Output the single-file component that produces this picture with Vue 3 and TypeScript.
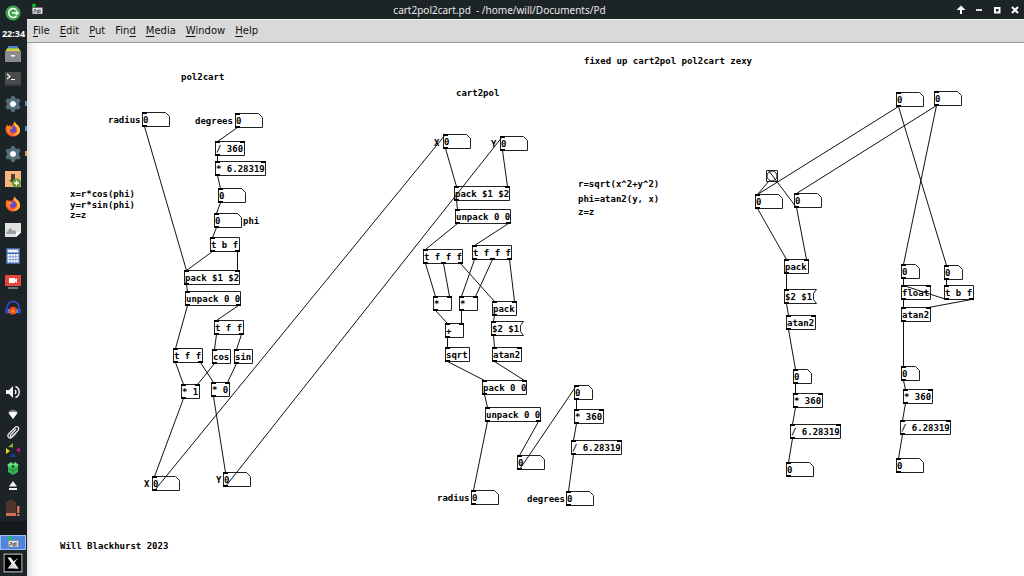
<script setup lang="ts">
import { computed } from 'vue'

type Kind = 'object' | 'number' | 'message' | 'bang'
interface PatchNode { id: string; kind: Kind; x: number; y: number; w: number; text: string; ins: number; outs: number }
interface Shape { d: string; fill?: string; stroke?: string; width?: number }

const BOX_H = 15
const PORT_W = 5

function obj(id: string, x: number, y: number, w: number, text: string, ins = 1, outs = 1): PatchNode {
  return { id, kind: 'object', x, y, w, text, ins, outs }
}
function num(id: string, x: number, y: number, w = 28): PatchNode {
  return { id, kind: 'number', x, y, w, text: '0', ins: 1, outs: 1 }
}
function msg(id: string, x: number, y: number, text: string): PatchNode {
  return { id, kind: 'message', x, y, w: 33, text, ins: 1, outs: 1 }
}

const nodes: PatchNode[] = [
  num('radius', 115, 69),
  num('degrees', 208, 70),
  obj('div360', 188, 98, 30, '/ 360', 2),
  obj('mulTau', 188, 118, 51, '* 6.28319', 2),
  num('rad', 191, 145),
  num('phi', 187, 170),
  obj('tbf', 183, 194, 30, 't b f', 1, 2),
  obj('packA', 157, 227, 56, 'pack $1 $2', 2),
  obj('unpackA', 158, 248, 56, 'unpack 0 0', 1, 2),
  obj('tffB', 187, 277, 30, 't f f', 1, 2),
  obj('tffA', 146, 305, 30, 't f f', 1, 2),
  obj('cos', 185, 306, 19, 'cos'),
  obj('sin', 207, 306, 19, 'sin'),
  obj('mul1', 154, 341, 19, '* 1', 2),
  obj('mul0', 184, 339, 19, '* 0', 2),
  num('outX', 125, 433),
  num('outY', 196, 429),

  num('inX', 416, 91),
  num('inY', 473, 93),
  obj('packB', 427, 143, 56, 'pack $1 $2', 2),
  obj('unpackB', 428, 166, 56, 'unpack 0 0', 1, 2),
  obj('tfffA', 396, 206, 40, 't f f f', 1, 3),
  obj('tfffB', 445, 202, 40, 't f f f', 1, 3),
  obj('sqX', 406, 253, 19, '*', 2),
  obj('sqY', 432, 253, 19, '*', 2),
  obj('packC', 465, 258, 25, 'pack', 2),
  msg('swapA', 464, 278, '$2 $1'),
  obj('add', 418, 280, 19, '+', 2),
  obj('sqrt', 418, 304, 25, 'sqrt'),
  obj('atanA', 465, 304, 30, 'atan2', 2),
  obj('packD', 455, 337, 45, 'pack 0 0', 2),
  obj('unpackD', 458, 364, 56, 'unpack 0 0', 1, 2),
  num('angIn', 547, 342, 19),
  obj('mulB', 547, 366, 30, '* 360', 2),
  obj('divB', 544, 397, 51, '/ 6.28319', 2),
  num('ang', 490, 412),
  num('radiusOut', 444, 447),
  num('degreesOut', 539, 448),

  num('srcA', 869, 49),
  num('srcB', 907, 48),
  { id: 'bang', kind: 'bang', x: 739, y: 127, w: 12, text: '', ins: 1, outs: 1 },
  num('pairA', 728, 151),
  num('pairB', 767, 150),
  obj('packE', 757, 216, 25, 'pack', 2),
  msg('swapE', 757, 246, '$2 $1'),
  obj('atanE', 759, 272, 30, 'atan2', 2),
  num('angE', 766, 326, 19),
  obj('mulE', 766, 350, 30, '* 360', 2),
  obj('divE', 763, 381, 51, '/ 6.28319', 2),
  num('degE', 759, 419),
  num('floatIn', 874, 221, 19),
  num('trigIn', 917, 222, 19),
  obj('float', 874, 242, 30, 'float', 2),
  obj('tbfF', 917, 242, 30, 't b f', 1, 2),
  obj('atanF', 874, 264, 30, 'atan2', 2),
  num('angF', 874, 323, 19),
  obj('mulF', 876, 346, 30, '* 360', 2),
  obj('divF', 873, 377, 51, '/ 6.28319', 2),
  num('degF', 869, 415),
]

/* source, outlet, destination, inlet */
const cords: [string, number, string, number][] = [
  ['radius', 0, 'packA', 0], ['degrees', 0, 'div360', 0], ['div360', 0, 'mulTau', 0],
  ['mulTau', 0, 'rad', 0], ['rad', 0, 'phi', 0], ['phi', 0, 'tbf', 0],
  ['tbf', 0, 'packA', 0], ['tbf', 1, 'packA', 1], ['packA', 0, 'unpackA', 0],
  ['unpackA', 0, 'tffA', 0], ['unpackA', 1, 'tffB', 0], ['tffB', 0, 'cos', 0], ['tffB', 1, 'sin', 0],
  ['tffA', 0, 'mul1', 0], ['tffA', 1, 'mul0', 0], ['cos', 0, 'mul1', 1], ['sin', 0, 'mul0', 1],
  ['mul1', 0, 'outX', 0], ['mul0', 0, 'outY', 0], ['outX', 0, 'inX', 0], ['outY', 0, 'inY', 0],
  ['inX', 0, 'packB', 0], ['inY', 0, 'packB', 1], ['packB', 0, 'unpackB', 0],
  ['unpackB', 0, 'tfffA', 0], ['unpackB', 1, 'tfffB', 0],
  ['tfffA', 0, 'sqX', 0], ['tfffA', 1, 'sqX', 1], ['tfffA', 2, 'packC', 0],
  ['tfffB', 0, 'sqY', 0], ['tfffB', 1, 'sqY', 1], ['tfffB', 2, 'packC', 1],
  ['sqX', 0, 'add', 0], ['sqY', 0, 'add', 1], ['add', 0, 'sqrt', 0], ['sqrt', 0, 'packD', 0],
  ['packC', 0, 'swapA', 0], ['swapA', 0, 'atanA', 0], ['atanA', 0, 'packD', 1],
  ['packD', 0, 'unpackD', 0], ['unpackD', 0, 'radiusOut', 0], ['unpackD', 1, 'ang', 0],
  ['ang', 0, 'angIn', 0], ['angIn', 0, 'mulB', 0], ['mulB', 0, 'divB', 0], ['divB', 0, 'degreesOut', 0],
  ['srcA', 0, 'pairA', 0], ['srcB', 0, 'pairB', 0], ['srcA', 0, 'trigIn', 0], ['srcB', 0, 'floatIn', 0],
  ['bang', 0, 'pairA', 0], ['pairB', 0, 'bang', 0], ['pairA', 0, 'packE', 0], ['pairB', 0, 'packE', 1],
  ['packE', 0, 'swapE', 0], ['swapE', 0, 'atanE', 0], ['atanE', 0, 'angE', 0],
  ['angE', 0, 'mulE', 0], ['mulE', 0, 'divE', 0], ['divE', 0, 'degE', 0],
  ['floatIn', 0, 'float', 0], ['trigIn', 0, 'tbfF', 0], ['tbfF', 0, 'float', 0], ['tbfF', 1, 'atanF', 1],
  ['float', 0, 'atanF', 0], ['atanF', 0, 'angF', 0], ['angF', 0, 'mulF', 0],
  ['mulF', 0, 'divF', 0], ['divF', 0, 'degF', 0],
]

const comments = [
  { x: 154, y: 26, text: 'pol2cart' },
  { x: 81, y: 69, text: 'radius', target: 'radius' },
  { x: 168, y: 70, text: 'degrees', target: 'degrees' },
  { x: 216, y: 170, text: 'phi', target: 'phi' },
  { x: 43, y: 143, text: 'x=r*cos(phi)' },
  { x: 43, y: 154, text: 'y=r*sin(phi)' },
  { x: 43, y: 164, text: 'z=z' },
  { x: 117, y: 433, text: 'X', target: 'outX' },
  { x: 189, y: 429, text: 'Y', target: 'outY' },
  { x: 33, y: 495, text: 'Will Blackhurst 2023' },
  { x: 429, y: 42, text: 'cart2pol' },
  { x: 407, y: 92, text: 'X', target: 'inX' },
  { x: 464, y: 93, text: 'Y', target: 'inY' },
  { x: 557, y: 10, text: 'fixed up cart2pol pol2cart zexy' },
  { x: 551, y: 133, text: 'r=sqrt(x^2+y^2)' },
  { x: 551, y: 148, text: 'phi=atan2(y, x)' },
  { x: 551, y: 161, text: 'z=z' },
  { x: 410, y: 447, text: 'radius', target: 'radiusOut' },
  { x: 500, y: 448, text: 'degrees', target: 'degreesOut' },
]

const byId = new Map(nodes.map(n => [n.id, n]))
const heightOf = (n: PatchNode) => (n.kind === 'bang' ? n.w : BOX_H)

function portX(n: PatchNode, i: number, count: number): number {
  return n.x + (count > 1 ? Math.round((i * (n.w - PORT_W)) / (count - 1)) : 0)
}

function outline(n: PatchNode): string {
  const l = n.x + 0.5, t = n.y + 0.5, r = n.x + n.w - 0.5, b = n.y + heightOf(n) - 0.5
  if (n.kind === 'number') return `M${l} ${t}H${r - 4}L${r} ${t + 4}V${b}H${l}Z`
  if (n.kind === 'message') return `M${r} ${t}H${l}V${b}H${r}L${r - 3} ${b - 4}V${t + 4}Z`
  return `M${l} ${t}H${r}V${b}H${l}Z`
}

const ports = computed(() =>
  nodes.filter(n => n.kind !== 'bang').flatMap(n => [
    ...Array.from({ length: n.ins }, (_, i) => ({ x: portX(n, i, n.ins), y: n.y })),
    ...Array.from({ length: n.outs }, (_, i) => ({ x: portX(n, i, n.outs), y: n.y + BOX_H - 2 })),
  ]),
)

const lines = computed(() =>
  cords.map(([from, o, to, i]) => {
    const a = byId.get(from)!
    const b = byId.get(to)!
    return { x1: portX(a, o, a.outs) + 2.5, y1: a.y + heightOf(a) - 0.5, x2: portX(b, i, b.ins) + 2.5, y2: b.y + 0.5 }
  }),
)

const menus = [
  ['', 'F', 'ile'], ['', 'E', 'dit'], ['', 'P', 'ut'], ['Fin', 'd', ''],
  ['', 'M', 'edia'], ['', 'W', 'indow'], ['', 'H', 'elp'],
]

const gear: Shape[] = [
  { d: 'M6.500 0h3l.7 2.200 1.600.9 2.200-.6 1.500 2.600-1.500 1.800v2.200l1.500 1.800-1.500 2.600-2.200-.6-1.600.9L9.500 16h-3l-.7-2.200-1.600-.9-2.200.6L.5 10.900 2 9.100V6.900L.5 5.100 2 2.500l2.200.6 1.600-.9z', fill: '#546e7a' },
  { d: 'M8 5a3 3 0 1 0 .01 0z', fill: '#fff' },
]
const firefox: Shape[] = [
  { d: 'M2 3.500L3.500 5 5 4l1 1.500C8 4 8.500 2.500 9.500 0.500c1 1.500 1.500 2.500 3 3.500 4 4 3 8 0 10.300-3 2-7 1.700-9.500-.8C0 10.500 0 7 2 3.500z', fill: '#ff5a2c' },
  { d: 'M9.500 .5c1 1.500 1.500 2.500 3 3.500 3 3 3 6 1.500 8.500-2 2-5 2.500-7 1.500 4-.5 6-3 5-6C11.500 6 8 5 9.500 .5z', fill: '#ffbd2e' },
  { d: 'M8 5a3.500 3.500 0 1 0 .01 0z', fill: '#6b46c9' },
  { d: 'M1.500 6C4 4.500 6 6 8 7L5 8.500C4 10 5 12 7 13c-3 0-5-2-5.500-7z', fill: '#ff8a1f' },
]
const icons: Record<string, Shape[]> = {
  gear,
  firefox,
  logout: [
    { d: 'M8 .5a7.500 7.500 0 1 0 .01 0z', fill: '#3fa34d' },
    { d: 'M11.500 5A4.500 4.500 0 1 0 11.500 11M7 8h6M11 6l2 2-2 2', stroke: '#fff', width: 1.5 },
  ],
  files: [
    { d: 'M3 0h10v3H3z', fill: '#4a86cf' }, { d: 'M2 2h12v3H2z', fill: '#7bc950' },
    { d: 'M1 3.500h14v2H1z', fill: '#f4cf3a' }, { d: 'M0 5h16v11H0z', fill: '#8b8b8b' }, { d: 'M6 9h4v1.500H6z', fill: '#fff' },
  ],
  terminal: [
    { d: 'M0 1h16v14H0z', fill: '#4b4b4b' }, { d: 'M0 13h16v2H0z', fill: '#3b3b3b' },
    { d: 'M2 3l3 2.500L2 8M6 8.500h4', stroke: '#f5f5f5', width: 1.2 },
  ],
  installer: [
    { d: 'M0 0h16v16H0z', fill: '#f5b57c' }, { d: 'M6 3h4v6h2l-4 3.500L4 9h2z', fill: '#4b4038' },
    { d: 'M11.500 7.500a4.500 4.500 0 1 0 .01 0z', fill: '#5e9b2d' }, { d: 'M11.500 9.500v5M9 12h5', stroke: '#fff', width: 1.5 },
  ],
  picture: [
    { d: 'M0 1h16v9.500L11 15H0z', fill: '#e2e2e2' }, { d: 'M11 15v-4.500h5z', fill: '#fff' },
    { d: 'M1.500 12V10.500L5.500 5.500 8 9l1.500-1.500L11 10v2z', fill: '#a0a0a0' },
  ],
  calculator: [
    { d: 'M1 0h14v16H1z', fill: '#3f65a8' }, { d: 'M2.500 1.500h11v3h-11z', fill: '#e9eef8' },
    { d: 'M2.500 6h11v8.500h-11z', fill: '#fff' }, { d: 'M5.200 6v8.500M8 6v8.500M10.800 6v8.500M2.500 8.800h11M2.500 11.600h11', stroke: '#7391c6', width: .8 },
  ],
  recorder: [
    { d: 'M0 1h16v11H0z', fill: '#e8453c' }, { d: 'M4 4h6v1.500L12 4v5L10 7.500V9H4z', fill: '#fff' }, { d: 'M3 13h10v2H3z', fill: '#6f7375' },
  ],
  headphones: [
    { d: 'M2 9V7.500a6 6 0 0 1 12 0V9', stroke: '#3543b5', width: 1.8 },
    { d: 'M0 9l3-2v7H1.500L0 12zM16 9l-3-2v7h1.500L16 12z', fill: '#3041bd' },
    { d: 'M3 9h2v4H3zM11 9h2v4h-2z', fill: '#2aa7e8' },
    { d: 'M8 6l1.500 1.500 2-.5v2l1 1.500-1.500 1.500v2L9 14l-1 1-1.500-1-2 .5v-2L3.500 11 5 9V7l2 .5z', fill: '#f0441e' },
    { d: 'M8 9l2 2-2 2-2-2z', fill: '#ff9d1e' },
  ],
  volume: [
    { d: 'M1 6h3l4-4v12l-4-4H1z', fill: '#f2f2f2' }, { d: 'M10 6q2 2 0 4M10.500 2.500c5 2 5 9 0 11', stroke: '#f2f2f2', width: 1.4 },
  ],
  wifi: [{ d: 'M3 6Q8 1 13 6L8 13z', fill: '#777d7f' }, { d: 'M3.500 7Q8 4.500 12.500 7L8 13z', fill: '#fff' }],
  clip: [{ d: 'M11 5l-5.500 6c-1 1.500 .5 2.500 1.500 1.500L13 6.500c2-2.500-.8-5-3-3L4 9.500c-3 3 .5 6 3.200 3.500l4.300-4.500', stroke: '#e3e3e3', width: 1.3 }],
  pinwheel: [
    { d: 'M3 5l5-4v4.500z', fill: '#83b52d' }, { d: 'M1 6l4 3-4 3z', fill: '#f2d319' },
    { d: 'M15 5v6l-4-3z', fill: '#c0127e' }, { d: 'M8 11l4 4H4z', fill: '#123e98' },
  ],
  box: [
    { d: 'M3 5l5 2 5-2v7l-5 3-5-3z', fill: '#34b957' }, { d: 'M2 5l4-3 2 2 2-2 4 3-3 2-3-2-3 2z', fill: '#65e27f' },
    { d: 'M8 7v8M4 9l3 2M12 9l-3 2', stroke: '#1c6e34', width: .8 },
  ],
  eject: [{ d: 'M8 3l4 5.500H4zM4 10h8v2H4z', fill: '#f2f2f2' }],
  battery: [
    { d: 'M3.500 0h5v1.500H11V16H1V1.500h2.500z', fill: '#50342e' }, { d: 'M1 13h10v3H1z', fill: '#d3705a' },
    { d: 'M12 6h2.500v7H12zM12 14h2.500v2H12z', fill: '#d3705a' },
  ],
  patch: [
    { d: 'M2 0h4v4H2z', fill: '#08d516' }, { d: 'M2 5h13v8H2z', fill: '#eee', stroke: '#777', width: .6 },
    { d: 'M4 7.500h2.500v2H4V12M10.500 7v4.500H8V9h2.500M12 7v5', stroke: '#333', width: 1 },
  ],
  xorg: [
    { d: 'M0 0h16v16H0z', fill: '#000', stroke: '#aaa', width: 1 },
    { d: 'M3 3h3l7 10h-3z', fill: '#fff' }, { d: 'M13 3L9 8 3 13 7.500 7.500z', fill: '#fff' },
    { d: 'M3 13l5-4 5 4z', fill: '#ddd' },
  ],
  up: [{ d: 'M8 3.500l4.500 4.500H9v4H7V8H3.500z', fill: '#fff' }],
  minus: [{ d: 'M5 7h6v2H5z', fill: '#ddd' }],
  square: [{ d: 'M6 6h4.500v4.500H6z', stroke: '#fff', width: 2 }],
  close: [{ d: 'M5 5l6 6M11 5l-6 6', stroke: '#fff', width: 2 }],
}

const launchers = [
  { icon: 'files', name: 'Files' }, { icon: 'terminal', name: 'Terminal' },
  { icon: 'gear', name: 'Settings', mark: 'blue' }, { icon: 'firefox', name: 'Firefox', mark: 'blue' },
  { icon: 'gear', name: 'Preferences', mark: 'orange' }, { icon: 'installer', name: 'Install software' },
]
const apps = [
  { icon: 'firefox', name: 'Browser' }, { icon: 'picture', name: 'Image viewer' },
  { icon: 'calculator', name: 'Calculator' }, { icon: 'recorder', name: 'Screen recorder' },
  { icon: 'headphones', name: 'Audio editor' },
]
const tray = [
  { icon: 'wifi', name: 'Network' }, { icon: 'clip', name: 'Clipboard' }, { icon: 'pinwheel', name: 'Colour profile' },
  { icon: 'box', name: 'Packages' }, { icon: 'eject', name: 'Eject' },
]
const controls = [
  { icon: 'up', name: 'Keep above' }, { icon: 'minus', name: 'Minimize' },
  { icon: 'square', name: 'Maximize' }, { icon: 'close', name: 'Close' },
]
</script>

<template>
  <div class="desktop">
    <svg class="defs" aria-hidden="true">
      <symbol v-for="(shapes, name) in icons" :id="'i-' + name" :key="name" viewBox="-1 -1 18 18">
        <path v-for="(s, k) in shapes" :key="k" :d="s.d" :fill="s.fill ?? 'none'" :stroke="s.stroke" :stroke-width="s.width" />
      </symbol>
    </svg>

    <aside class="panel">
      <button class="slot" aria-label="Log out"><svg class="icon"><use href="#i-logout" /></svg></button>
      <time class="clock">22:34</time>
      <button v-for="l in launchers" :key="l.name" class="slot" :aria-label="l.name">
        <svg class="icon"><use :href="'#i-' + l.icon" /></svg>
        <span v-if="l.mark" class="mark" :class="l.mark"></span>
      </button>
      <button v-for="a in apps" :key="a.name" class="slot tall" :aria-label="a.name">
        <svg class="icon"><use :href="'#i-' + a.icon" /></svg>
      </button>
      <div class="spacer"></div>
      <button class="slot tall" aria-label="Volume"><svg class="icon"><use href="#i-volume" /></svg></button>
      <button v-for="t in tray" :key="t.name" class="slot small" :aria-label="t.name">
        <svg class="icon"><use :href="'#i-' + t.icon" /></svg>
      </button>
      <button class="slot tall" aria-label="Battery"><svg class="icon"><use href="#i-battery" /></svg></button>
      <div class="band"></div>
      <button class="task" aria-label="cart2pol2cart.pd"><svg class="task-icon"><use href="#i-patch" /></svg></button>
      <button class="slot tall" aria-label="X server"><svg class="x-icon"><use href="#i-xorg" /></svg></button>
    </aside>

    <main class="window">
      <header class="titlebar">
        <svg class="app-icon"><use href="#i-patch" /></svg>
        <h1 class="title">cart2pol2cart.pd&nbsp; - /home/will/Documents/Pd</h1>
        <div class="controls">
          <button v-for="c in controls" :key="c.name" class="control" :aria-label="c.name">
            <svg class="control-icon"><use :href="'#i-' + c.icon" /></svg>
          </button>
        </div>
      </header>

      <nav class="menubar">
        <button v-for="m in menus" :key="m.join('')" class="menu">{{ m[0] }}<u>{{ m[1] }}</u>{{ m[2] }}</button>
      </nav>

      <section class="canvas">
        <template v-for="n in nodes" :key="n.id">
          <input v-if="n.kind === 'number'" :id="n.id" class="node" :value="n.text" :aria-label="n.id"
            :style="{ left: n.x + 'px', top: n.y + 'px', width: n.w + 'px' }">
          <button v-else-if="n.kind === 'message' || n.kind === 'bang'" class="node" :aria-label="n.text || 'bang'"
            :style="{ left: n.x + 'px', top: n.y + 'px', width: n.w + 'px' }">{{ n.text }}</button>
          <div v-else class="node" :style="{ left: n.x + 'px', top: n.y + 'px', width: n.w + 'px' }">{{ n.text }}</div>
        </template>
        <component :is="c.target ? 'label' : 'p'" v-for="(c, k) in comments" :key="k" class="comment" :for="c.target"
          :style="{ left: c.x + 'px', top: c.y + 'px' }">{{ c.text }}</component>

        <svg class="wires" aria-hidden="true">
          <path v-for="n in nodes" :key="n.id" class="outline" :d="outline(n)" />
          <circle class="outline" cx="745" cy="133" r="5" />
          <rect v-for="(p, k) in ports" :key="k" :x="p.x" :y="p.y" :width="PORT_W" height="2" />
          <line v-for="(l, k) in lines" :key="k" class="cord" v-bind="l" />
        </svg>
      </section>
    </main>
  </div>
</template>

<style>
body { margin: 0; }
</style>

<style scoped>
.desktop {
  display: grid;
  grid-template-columns: 27px 1fr;
  min-height: 100vh;
  background: #fff;
}
.defs { position: absolute; width: 0; height: 0; }
button {
  margin: 0;
  padding: 0;
  border: 0;
  background: none;
  color: inherit;
  font: inherit;
}
.panel {
  display: flex;
  flex-direction: column;
  background: #1d2427;
  color: #fff;
}
.slot {
  position: relative;
  display: flex;
  flex: none;
  align-items: center;
  justify-content: center;
  width: 25px;
  height: 25px;
}
.slot.tall { height: 26px; }
.slot.small { height: 18px; }
.icon { width: 18px; height: 18px; }
.clock {
  height: 16px;
  text-align: center;
  font: bold 9px/18px "Noto Sans", sans-serif;
}
.mark {
  position: absolute;
  right: -2px;
  width: 2px;
  height: 5px;
}
.mark.blue { background: #4a90d9; }
.mark.orange { background: #e8964a; }
.spacer { flex: 1; }
.band { height: 14px; background: #141a1b; }
.task {
  display: flex;
  align-items: center;
  justify-content: center;
  height: 15px;
  margin-right: 1px;
  border: 1px solid #9bbcf4;
  background: #5084dd;
}
.task-icon { width: 14px; height: 14px; }
.x-icon { width: 20px; height: 20px; }
.window {
  display: flex;
  flex-direction: column;
  min-width: 0;
}
.titlebar {
  display: grid;
  grid-template-columns: 20px 1fr 72px;
  align-items: center;
  height: 19px;
  background: #1d2427;
  color: #e8e8e8;
}
.app-icon { width: 14px; height: 14px; margin-left: 3px; }
.title {
  margin: 0;
  text-align: center;
  font: 10px/18px "Noto Sans", sans-serif;
}
.controls { display: flex; justify-content: flex-end; }
.control { display: flex; width: 18px; height: 18px; align-items: center; justify-content: center; }
.control-icon { width: 18px; height: 18px; }
.menubar {
  display: flex;
  gap: 10px;
  box-sizing: border-box;
  height: 24px;
  padding-left: 6px;
  border-top: 1px solid #eee;
  border-bottom: 1px solid #999;
  background: #d9d9d9;
  color: #111;
  font: 10px/22px "DejaVu Sans", sans-serif;
}
.menu u { text-underline-offset: 2px; }
.canvas {
  position: relative;
  flex: 1;
  overflow: hidden;
  background: linear-gradient(90deg, #dcdcdc, #f5f5f5 6px, #fff 12px);
  color: #000;
  font: bold 9px/16px "DejaVu Sans Mono", monospace;
}
.node {
  position: absolute;
  box-sizing: border-box;
  height: 16px;
  padding: 0 0 0 1px;
  border: 0;
  outline: 0;
  background: none;
  color: #000;
  font: inherit;
  text-align: left;
  white-space: pre;
}
.comment {
  position: absolute;
  margin: 0;
  white-space: pre;
}
.wires {
  position: absolute;
  inset: 0;
  width: 100%;
  height: 100%;
  pointer-events: none;
}
.outline { fill: none; stroke: #222; stroke-width: 1; }
.cord { stroke: #111; stroke-width: 1; }
</style>
